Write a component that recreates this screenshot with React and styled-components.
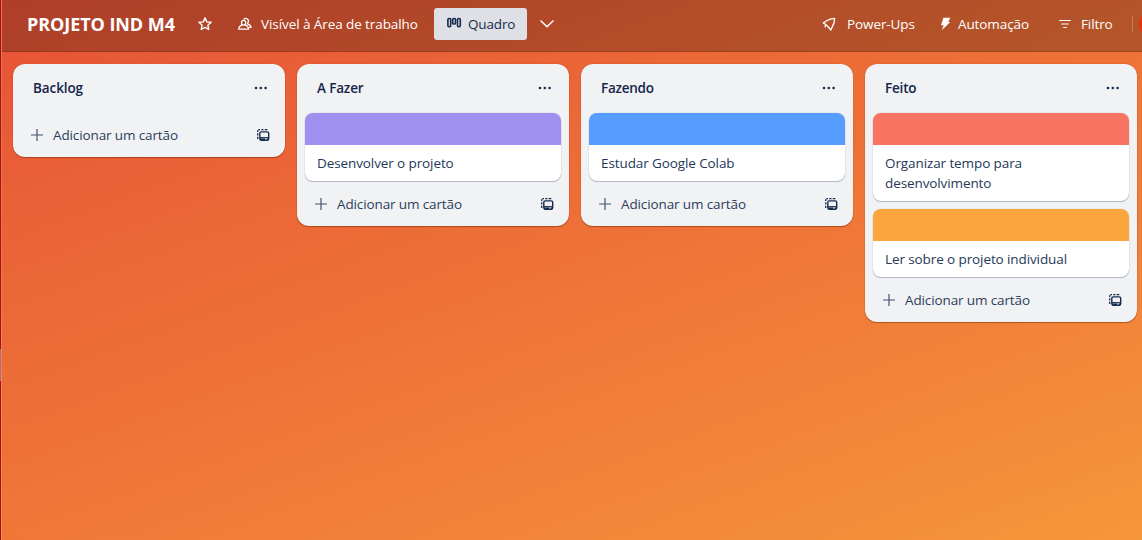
import React from "react";
import styled, { createGlobalStyle } from "styled-components";

const Global = createGlobalStyle`
  * { box-sizing: border-box; }
  body { margin: 0; overflow: hidden; }
  button { font: inherit; color: inherit; border: 0; padding: 0; background: none; letter-spacing: inherit; }
`;

const Board = styled.div`
  height: 540px;
  width: 1142px;
  overflow: hidden;
  display: flex;
  font-family: "Open Sans", "Noto Sans", sans-serif;
  font-size: 13.5px;
  line-height: 20px;
  color: #172b4d;
`;

const Rail = styled.div`
  width: 1px;
  flex: none;
  background: linear-gradient(#a5130a 0 349px, #b06a78 349px 381px, #a5130a 381px);
`;

const Main = styled.div`
  width: 1141px;
  flex: none;
  border-left: 1px solid rgba(255, 255, 255, 0.16);
  background: linear-gradient(160deg, #e65236 0%, #f07b38 62%, #f6963a 100%) border-box;
`;

const Header = styled.header`
  height: 52px;
  display: flex;
  align-items: center;
  padding: 0 0 4px 25px;
  background: rgba(0, 0, 0, 0.24);
  border-bottom: 1px solid rgba(0, 0, 0, 0.14);
  color: #fff;
`;

const Title = styled.h1`
  margin: 0;
  width: 170px;
  font-size: 18px;
  font-weight: 700;
  line-height: 24px;
  letter-spacing: -0.07px;
  white-space: nowrap;
`;

const Label = styled.span`
  white-space: nowrap;
  font-weight: ${(p) => p.$weight || 500};
  letter-spacing: ${(p) => p.$track || 0}px;
`;

const HeaderAction = styled.button`
  display: flex;
  align-items: center;
  flex: none;
  gap: ${(p) => p.$gap || 0}px;
  width: ${(p) => p.$width}px;
`;

const ViewButton = styled.button`
  display: flex;
  align-items: center;
  flex: none;
  gap: 6px;
  width: 93px;
  height: 32px;
  padding-left: 13px;
  border-radius: 3px;
  background: #dfe0e6;
  color: #172b4d;
`;

const ViewMenuButton = styled.button`
  display: flex;
  padding-left: 13px;
`;

const Spacer = styled.div`
  flex: 1;
`;

const Divider = styled.div`
  width: 1px;
  height: 16px;
  background: rgba(255, 255, 255, 0.25);
`;

const Avatar = styled.div`
  width: 28px;
  height: 28px;
  flex: none;
  margin: 0 -25px 0 6px;
  border-radius: 50%;
  background: #e8320a;
`;

const Lists = styled.main`
  display: flex;
  align-items: flex-start;
  gap: 12px;
  padding: 12px 0 0 11px;
`;

const List = styled.section`
  width: 272px;
  flex: none;
  padding: 8px 8px 0;
  border-radius: 12px;
  background: #f1f2f4;
  box-shadow: 0 1px 1px rgba(110, 30, 0, 0.45), 0 0 1px rgba(190, 50, 0, 0.9);
`;

const ListHeader = styled.div`
  display: flex;
  align-items: center;
  justify-content: space-between;
  height: 32px;
  padding: 0 9px 0 12px;
  margin-bottom: 9px;
`;

const ListName = styled.h2`
  margin: 0;
  font-size: 13.5px;
  line-height: 20px;
  font-weight: 600;
  color: #14264b;
  letter-spacing: ${(p) => p.$track || 0}px;
`;

const Card = styled.article`
  margin-bottom: 8px;
  border-radius: 8px;
  overflow: hidden;
  background: #fff;
  box-shadow: 0 1px 1px rgba(9, 30, 66, 0.25), 0 0 1px rgba(9, 30, 66, 0.31);
`;

const Cover = styled.div`
  height: 32px;
  background: ${(p) => p.$color};
`;

const CardText = styled.div`
  padding: 8px 12px;
  color: #253858;
  letter-spacing: -0.1px;
`;

const ListFooter = styled.div`
  display: flex;
  align-items: center;
  justify-content: space-between;
  height: ${(p) => (p.$empty ? 44 : 29)}px;
  margin-bottom: ${(p) => (p.$empty ? 0 : 8)}px;
  padding: 0 7px 0 10px;
`;

const AddCard = styled.button`
  display: flex;
  align-items: center;
  gap: 10px;
  color: #2c3e5d;
`;

const Star = () => (
  <svg width="16" height="16" viewBox="0 0 16 16" fill="none" stroke="#fff" strokeWidth="1.4" strokeLinejoin="round">
    <path d="M8 1.9l1.75 4 4.35.4-3.25 2.9.95 4.3L8 11.3l-3.8 2.2.95-4.3L1.9 6.3l4.35-.4z" />
  </svg>
);

const People = () => (
  <svg width="16" height="16" viewBox="0 0 16 16" fill="none" stroke="#fff" strokeWidth="1.25" strokeLinejoin="round" strokeLinecap="round">
    <ellipse cx="6.6" cy="6.7" rx="2.1" ry="2.3" />
    <path d="M5.2 8.9c-2 .7-3.500 2-3.500 4.200h9.900c0-2.200-1.500-3.500-3.500-4.200" />
    <path d="M7 3.200c.8-1 2.300-1.200 3.400-.3 1.200 1 1.300 2.600.5 3.800l-.4 1.100c2 .7 3.500 1.900 3.600 3.500h-2.300" />
  </svg>
);

const BoardIcon = () => (
  <svg width="15" height="16" viewBox="0 0 15 16" fill="none" stroke="#172b4d" strokeWidth="1.6">
    <rect x="0.9" y="2.5" width="2.8" height="8.200" rx="1.1" />
    <rect x="5.7" y="2.5" width="2.8" height="5.500" rx="1.1" />
    <rect x="10.5" y="2.5" width="2.8" height="8.200" rx="1.1" />
  </svg>
);

const Chevron = () => (
  <svg width="14" height="8" viewBox="0 0 14 8" fill="none" stroke="#fff" strokeWidth="1.5" strokeLinecap="round" strokeLinejoin="round">
    <path d="M1 1l6 5.800L13 1" />
  </svg>
);

const Rocket = () => (
  <svg width="14" height="14" viewBox="0 0 14 14" fill="none" stroke="#fff" strokeWidth="1.3" strokeLinejoin="round" strokeLinecap="round">
    <path d="M12.600 1.400C9.400 1.600 6.500 2.600 4.300 4L1.200 6l2.300 1.300 3.300 3.200 2 2.500 1.700-3.600c1.200-2.300 2.200-4.900 2.100-8z" />
    <path d="M3.500 7.500L3.200 9.900" />
  </svg>
);

const Bolt = () => (
  <svg width="11" height="14" viewBox="0 0 11 14" fill="#fff">
    <path d="M3.400.8h6.900L8.300 4.900h2L1.800 13.300l1.900-5H1z" />
  </svg>
);

const FilterIcon = () => (
  <svg width="12" height="10" viewBox="0 0 12 10" stroke="#fff" strokeWidth="1.2" strokeLinecap="round">
    <path d="M.7 1.500h10.600M2.700 5h6.600M4.700 8.500h2.600" />
  </svg>
);

const Dots = () => (
  <svg width="14" height="4" viewBox="0 0 14 4" fill="#172b4d">
    <circle cx="2" cy="2" r="1.3" />
    <circle cx="6.8" cy="2" r="1.3" />
    <circle cx="11.6" cy="2" r="1.3" />
  </svg>
);

const Plus = () => (
  <svg width="12" height="12" viewBox="0 0 12 12" stroke="#44546f" strokeWidth="1.2">
    <path d="M0 6h12M6 0v12" />
  </svg>
);

const Template = () => (
  <svg width="13" height="12" viewBox="0 0 13 12" fill="none" stroke="#172b4d">
    <rect x="2.8" y="2.9" width="8.900" height="8.300" rx="1.4" strokeWidth="1.4" />
    <path d="M3 8.700h8.500" strokeWidth="1.2" />
    <path d="M3 10.400h5M9.800 10.400h1.700" strokeWidth="1.6" />
    <path d="M1.300.7h1.700M4.300.7h2.200M7.700.7h2.600M.7 1.300v1.700M.7 4.300v2.200M.7 7.700v2.200" strokeWidth="1.3" />
  </svg>
);

const lists = [
  { name: "Backlog", track: -0.1, cards: [] },
  { name: "A Fazer", track: -0.15, cards: [{ text: "Desenvolver o projeto", color: "#9f8fef" }] },
  { name: "Fazendo", track: -0.25, cards: [{ text: "Estudar Google Colab", color: "#579dff" }] },
  {
    name: "Feito",
    track: -0.2,
    cards: [
      { text: "Organizar tempo para desenvolvimento", color: "#f87462" },
      { text: "Ler sobre o projeto individual", color: "#faa53d" },
    ],
  },
];

export default function App() {
  return (
    <>
      <Global />
      <Board>
        <Rail />
        <Main>
          <Header>
            <Title>PROJETO IND M4</Title>
            <HeaderAction $width={40}><Star /></HeaderAction>
            <HeaderAction $width={197} $gap={8}>
              <People />
              <Label $track={-0.08}>Visível à Área de trabalho</Label>
            </HeaderAction>
            <ViewButton>
              <BoardIcon />
              <Label $weight={400} $track={-0.15}>Quadro</Label>
            </ViewButton>
            <ViewMenuButton><Chevron /></ViewMenuButton>
            <Spacer />
            <HeaderAction $width={118} $gap={11}>
              <Rocket />
              <Label $track={-0.1}>Power-Ups</Label>
            </HeaderAction>
            <HeaderAction $width={119} $gap={7}>
              <Bolt />
              <Label $track={-0.1}>Automação</Label>
            </HeaderAction>
            <HeaderAction $width={73} $gap={10}>
              <FilterIcon />
              <Label $track={-0.1}>Filtro</Label>
            </HeaderAction>
            <Divider />
            <Avatar />
          </Header>
          <Lists>
            {lists.map((list) => (
              <List key={list.name}>
                <ListHeader>
                  <ListName $track={list.track}>{list.name}</ListName>
                  <Dots />
                </ListHeader>
                {list.cards.map((card) => (
                  <Card key={card.text}>
                    <Cover $color={card.color} />
                    <CardText>{card.text}</CardText>
                  </Card>
                ))}
                <ListFooter $empty={list.cards.length === 0}>
                  <AddCard>
                    <Plus />
                    <Label $weight={400} $track={-0.12}>Adicionar um cartão</Label>
                  </AddCard>
                  <Template />
                </ListFooter>
              </List>
            ))}
          </Lists>
        </Main>
      </Board>
    </>
  );
}
